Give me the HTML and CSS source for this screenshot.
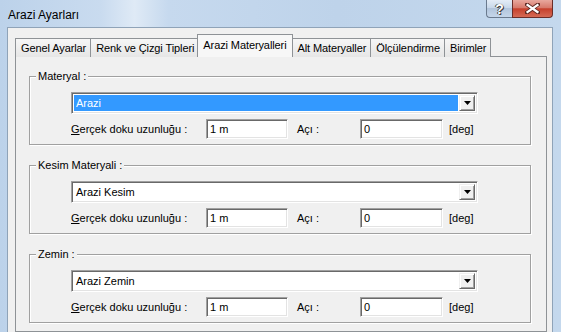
FILE: index.html
```html
<!DOCTYPE html>
<html>
<head>
<meta charset="utf-8">
<link rel="stylesheet" href="styles.css">
</head>
<body>
<div class="window">
  <div class="titlebar">
    <span class="title">Arazi Ayarları</span>
    <div class="caption-buttons">
      <div class="cap-btn help">?</div>
      <div class="cap-btn close">
        <svg width="15" height="11" viewBox="0 0 15 11">
          <path d="M2 1.5 L13 9.5 M13 1.5 L2 9.5" stroke="#5a2620" stroke-width="4" stroke-linecap="square" fill="none"/>
          <path d="M2.5 2 L12.5 9 M12.5 2 L2.5 9" stroke="#fff" stroke-width="2.2" stroke-linecap="square" fill="none"/>
        </svg>
      </div>
    </div>
  </div>
  <div class="client">
    <div class="tabs">
      <div class="tab">Genel Ayarlar</div>
      <div class="tab">Renk ve Çizgi Tipleri</div>
      <div class="tab active">Arazi Materyalleri</div>
      <div class="tab">Alt Materyaller</div>
      <div class="tab">Ölçülendirme</div>
      <div class="tab">Birimler</div>
    </div>
    <div class="panel">
      <fieldset class="group">
        <legend>Materyal :</legend>
        <div class="combo">
          <div class="combo-field"><span class="combo-text selected">Arazi</span></div>
          <div class="combo-btn"><svg width="7" height="4" viewBox="0 0 7 4"><path d="M0 0 H7 L3.5 4 Z" fill="#000"/></svg></div>
        </div>
        <div class="row">
          <span class="lbl-main"><u>G</u>erçek doku uzunluğu :</span>
          <div class="edit w1">1 m</div>
          <span class="lbl-angle">Açı :</span>
          <div class="edit w2">0</div>
          <span class="unit">[deg]</span>
        </div>
      </fieldset>
      <fieldset class="group">
        <legend>Kesim Materyali :</legend>
        <div class="combo">
          <div class="combo-field"><span class="combo-text">Arazi Kesim</span></div>
          <div class="combo-btn"><svg width="7" height="4" viewBox="0 0 7 4"><path d="M0 0 H7 L3.5 4 Z" fill="#000"/></svg></div>
        </div>
        <div class="row">
          <span class="lbl-main"><u>G</u>erçek doku uzunluğu :</span>
          <div class="edit w1">1 m</div>
          <span class="lbl-angle">Açı :</span>
          <div class="edit w2">0</div>
          <span class="unit">[deg]</span>
        </div>
      </fieldset>
      <fieldset class="group">
        <legend>Zemin :</legend>
        <div class="combo">
          <div class="combo-field"><span class="combo-text">Arazi Zemin</span></div>
          <div class="combo-btn"><svg width="7" height="4" viewBox="0 0 7 4"><path d="M0 0 H7 L3.5 4 Z" fill="#000"/></svg></div>
        </div>
        <div class="row">
          <span class="lbl-main"><u>G</u>erçek doku uzunluğu :</span>
          <div class="edit w1">1 m</div>
          <span class="lbl-angle">Açı :</span>
          <div class="edit w2">0</div>
          <span class="unit">[deg]</span>
        </div>
      </fieldset>
    </div>
  </div>
</div>
</body>
</html>
```

FILE: styles.css
```css
html, body {
  margin: 0;
  padding: 0;
  width: 561px;
  height: 332px;
  overflow: hidden;
}
body {
  font-family: "Liberation Sans", Arial, sans-serif;
  font-size: 11px;
  color: #000;
}
.window {
  width: 561px;
  height: 332px;
  display: flex;
  flex-direction: column;
  background: linear-gradient(90deg, #bcd2ea 0%, #c9dbef 18%, #dfeaf6 24%, #c6d9ee 30%, #bed3ea 60%, #c4d8ed 100%);
}
.titlebar {
  height: 27px;
  display: flex;
  justify-content: space-between;
  align-items: flex-start;
  flex: none;
}
.title {
  font-size: 12px;
  padding: 8px 0 0 8px;
  color: #000;
}
.caption-buttons {
  display: flex;
  margin-right: 8px;
}
.cap-btn {
  height: 18px;
  border: 1px solid #6a7a8e;
  border-top: none;
  display: flex;
  align-items: center;
  justify-content: center;
  box-sizing: border-box;
}
.help {
  width: 26px;
  border-radius: 0 0 0 4px;
  background: linear-gradient(#e3ecf6, #c9d8ea 45%, #b2c5dc 50%, #c5d6ea);
  color: #fff;
  font-weight: bold;
  font-size: 14px;
  text-shadow: 0 0 1px #333, 1px 1px 0 #444, -1px 0 0 #555;
  border-right: none;
}
.close {
  width: 41px;
  border-color: #6b2d28;
  border-radius: 0 0 4px 0;
  background: linear-gradient(#e8a89e, #d77a6c 45%, #c6402c 52%, #d56a55);
}
.client {
  flex: 1;
  margin: 0 8px 0 7px;
  border: 1px solid #8fa3b8;
  border-bottom: none;
  background: #f0f0f0;
  padding: 6px 5px 0 7px;
  display: flex;
  flex-direction: column;
}
.tabs {
  display: flex;
  align-items: flex-end;
  height: 23px;
  position: relative;
  z-index: 1;
  margin-bottom: -1px;
  padding-left: 0;
}
.tab {
  height: 19px;
  line-height: 18px;
  padding: 0 4px 0 5px;
  border: 1px solid #8e9296;
  border-bottom: none;
  margin-right: -1px;
  background: linear-gradient(#f6f6f6, #e6e6e6);
  box-sizing: border-box;
  white-space: nowrap;
  letter-spacing: -0.1px;
}
.tab.active {
  height: 23px;
  line-height: 20px;
  background: #f7f7f7;
  margin: 0 -1px 0 -1px;
  padding: 0 5px;
  position: relative;
  z-index: 2;
  border-color: #8e9296;
}
.panel {
  flex: 1;
  border: 1px solid #8e9296;
  background: #f0f0f0;
  padding: 13px 15px 0 13px;
  display: flex;
  flex-direction: column;
  gap: 14px;
}
.group {
  margin: 0;
  padding: 0 0 5px 0;
  border: 1px solid #a0a0a0;
  box-shadow: inset 1px 1px 0 #fff, 1px 1px 0 #fff;
  min-width: 0;
}
.group legend {
  margin-left: 6px;
  padding: 0 2px;
  background: #f0f0f0;
  line-height: 13px;
}
.combo {
  margin: 9px 0 0 41px;
  width: 407px;
  height: 22px;
  box-sizing: border-box;
  display: flex;
  border-top: 1px solid #a0a0a0;
  border-left: 1px solid #a0a0a0;
  border-right: 1px solid #fff;
  border-bottom: 1px solid #fff;
  box-shadow: inset 1px 1px 0 #696969, inset -1px -1px 0 #e3e3e3;
  background: #fff;
  padding: 2px;
}
.combo-field {
  flex: 1;
  display: flex;
  padding: 0 1px 0 0;
}
.combo-text {
  flex: 1;
  padding-left: 2px;
  line-height: 16px;
}
.combo-text.selected {
  background: #3399ff;
  color: #fff;
}
.combo-btn {
  width: 16px;
  height: 16px;
  box-sizing: border-box;
  background: #f0f0f0;
  border-top: 1px solid #f0f0f0;
  border-left: 1px solid #f0f0f0;
  border-right: 1px solid #696969;
  border-bottom: 1px solid #696969;
  box-shadow: inset 1px 1px 0 #fff, inset -1px -1px 0 #a0a0a0;
  display: flex;
  align-items: center;
  justify-content: center;
}
.row {
  margin: 5px 0 0 41px;
  display: flex;
  align-items: center;
  height: 20px;
}
.lbl-main {
  width: 135px;
}
.lbl-angle {
  margin-left: 9px;
  width: 63px;
}
.edit {
  height: 20px;
  box-sizing: border-box;
  border-top: 1px solid #a0a0a0;
  border-left: 1px solid #a0a0a0;
  border-right: 1px solid #fff;
  border-bottom: 1px solid #fff;
  box-shadow: inset 1px 1px 0 #696969, inset -1px -1px 0 #e3e3e3;
  background: #fff;
  padding: 0 3px;
  line-height: 18px;
}
.w1 { width: 82px; }
.w2 { width: 83px; }
.unit {
  margin-left: 6px;
  color: #000;
}
```
